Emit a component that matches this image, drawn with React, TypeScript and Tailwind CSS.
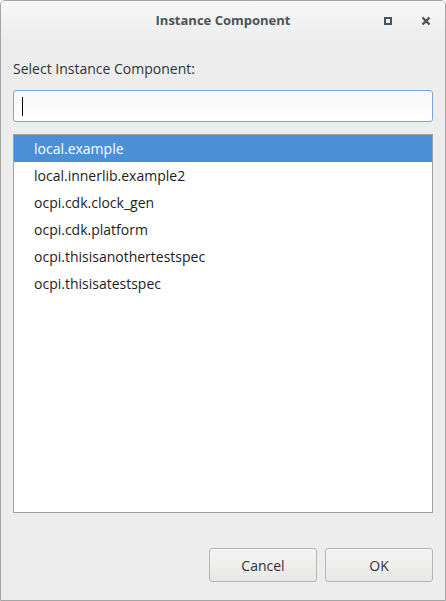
const items = [
  'local.example',
  'local.innerlib.example2',
  'ocpi.cdk.clock_gen',
  'ocpi.cdk.platform',
  'ocpi.thisisanothertestspec',
  'ocpi.thisisatestspec'
]

export default function App() {
  return (
    <div
      className="w-[446px] h-[601px] bg-[#ededed] border border-[#a5a5a5] rounded-t-[5px] flex flex-col text-[#2e3436] overflow-hidden"
      style={{ fontFamily: '"Open Sans", "DejaVu Sans", sans-serif' }}
    >
      {/* title bar */}
      <div className="h-[39px] shrink-0 relative flex items-center justify-center bg-gradient-to-b from-[#f7f7f7] to-[#ededed]">
        <span className="text-[13px] font-bold text-[#4b5458]">Instance Component</span>
        <div className="absolute right-0 top-0 h-full flex items-center">
          <div className="w-[38px] flex justify-center">
            <div className="w-[8px] h-[8px] border-2 border-[#4b5458]"></div>
          </div>
          <div className="w-[38px] flex justify-center">
            <svg width="10" height="10" viewBox="0 0 10 10">
              <path d="M1.5 1.5 L8.5 8.5 M8.5 1.5 L1.5 8.5" stroke="#4b5458" strokeWidth="2.4" />
            </svg>
          </div>
        </div>
      </div>

      <div className="flex-1 flex flex-col px-[12px]">
        <div className="text-[14px] mt-[19px] h-[20px] leading-[20px]">Select Instance Component:</div>

        <div className="mt-[11px] h-[32px] rounded-[3px] border border-[#7fa6d3] bg-gradient-to-b from-[#f8f8f8] to-white flex items-center pl-[8px]">
          <div className="w-[1px] h-[19px] bg-black"></div>
        </div>

        <div className="mt-[12px] h-[379px] border border-[#a1a1a1] bg-white flex flex-col">
          {items.map((item, i) => (
            <div
              key={item}
              className={
                'h-[27px] shrink-0 flex items-center pl-[20px] text-[14px] ' +
                (i === 0 ? 'bg-[#4a90d9] text-white' : 'text-[#1c1c1c]')
              }
            >
              {item}
            </div>
          ))}
        </div>

        <div className="mt-[35px] flex justify-end gap-[8px]">
          <button className="w-[108px] h-[34px] rounded-[3px] border border-[#b6b6b3] bg-gradient-to-b from-[#f4f4f4] to-[#e8e8e7] text-[14px] text-[#2e3436]">
            Cancel
          </button>
          <button className="w-[108px] h-[34px] rounded-[3px] border border-[#b6b6b3] bg-gradient-to-b from-[#f4f4f4] to-[#e8e8e7] text-[14px] text-[#2e3436]">
            OK
          </button>
        </div>
      </div>
    </div>
  )
}
